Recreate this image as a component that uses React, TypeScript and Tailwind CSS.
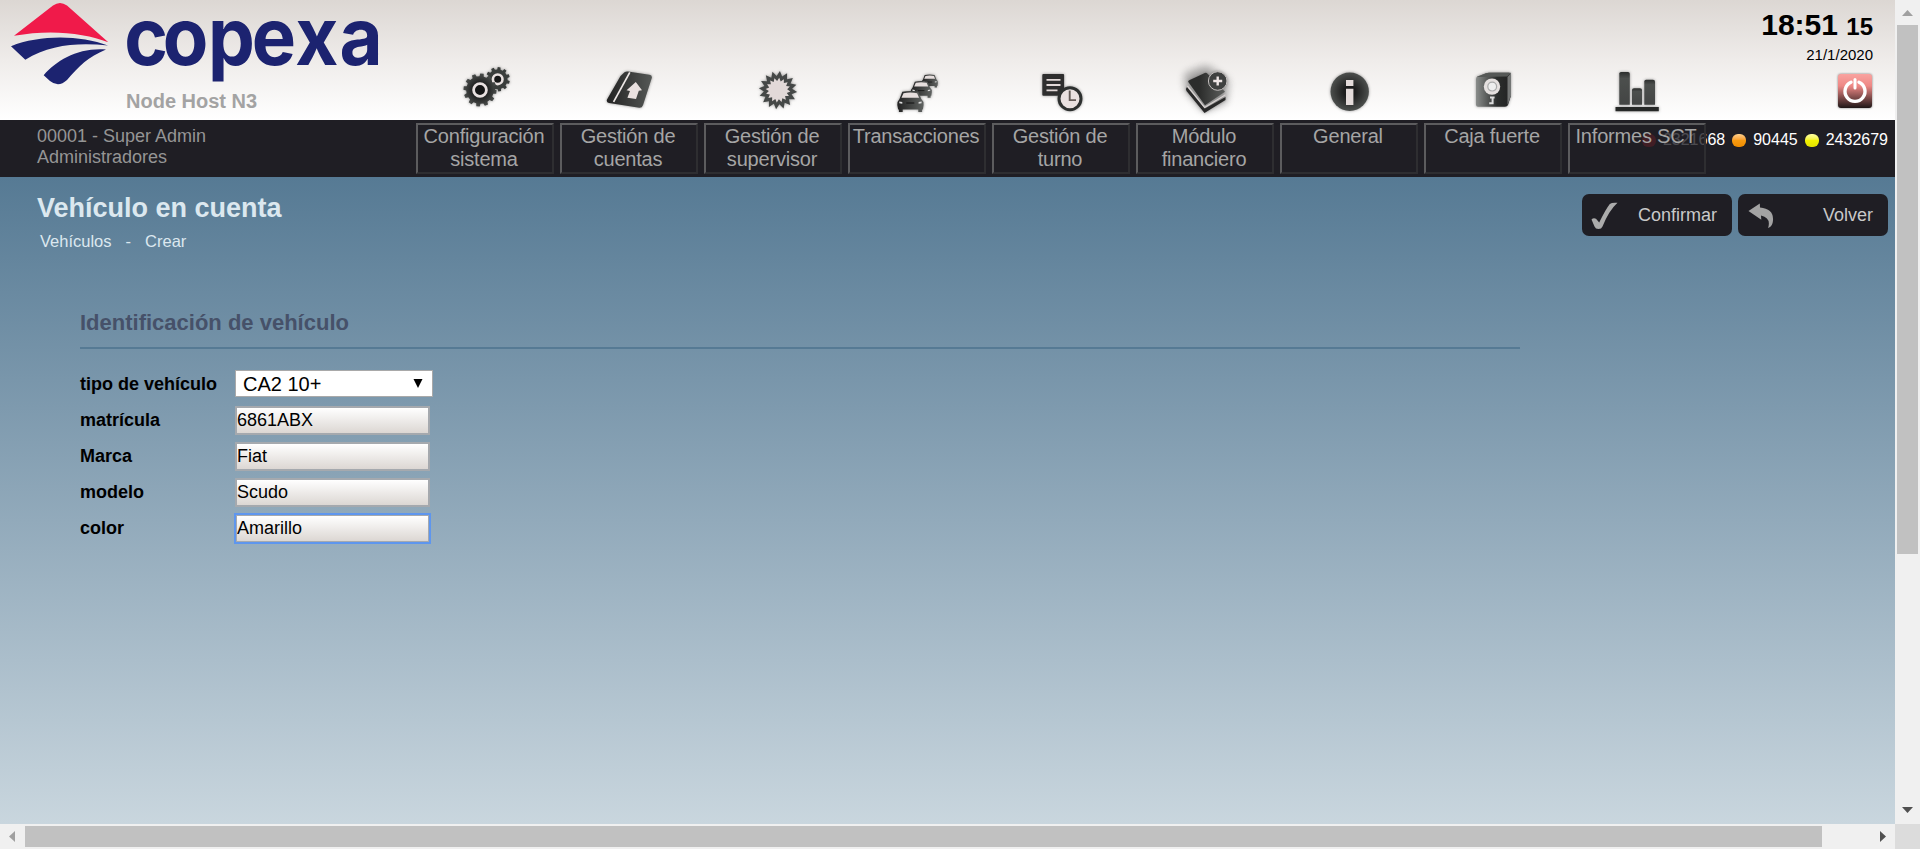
import type { ReactNode } from "react";

const DARK = "#2e2e2e";

function teeth(cx: number, cy: number, outer: number, inner: number, n: number, flat: number) {
  const pts: string[] = [];
  for (let i = 0; i < n; i++) {
    const base = (i / n) * Math.PI * 2 - Math.PI / 2 + 0.12;
    const step = (Math.PI * 2) / n;
    const add = (r: number, a: number) =>
      pts.push((cx + r * Math.cos(a)).toFixed(2) + "," + (cy + r * Math.sin(a)).toFixed(2));
    add(inner, base - step * 0.3);
    add(outer, base - step * flat);
    add(outer, base + step * flat);
    add(inner, base + step * 0.3);
  }
  return pts.join(" ");
}

function star(cx: number, cy: number, outer: number, inner: number, n: number) {
  const pts: string[] = [];
  for (let i = 0; i < n * 2; i++) {
    const a = (i / n) * Math.PI - Math.PI / 2 + 0.1;
    const r = i % 2 ? inner : outer;
    pts.push((cx + r * Math.cos(a)).toFixed(2) + "," + (cy + r * Math.sin(a)).toFixed(2));
  }
  return pts.join(" ");
}

function Car({ x, y, s }: { x: number; y: number; s: number }) {
  return (
    <g transform={`translate(${x} ${y}) scale(${s})`}>
      <path d="M5 0.8Q13 -0.8 21 0.8L24 8Q26.5 10 26.3 14L25.6 18.5H24.8V21H21V18.5H5.4V21H1.6V18.5H0.8L0 14Q0 10 2.2 8Z" fill="url(#car)" />
      <path d="M6.2 2.2Q13 1 19.8 2.2L21.8 6.8H4.2Z" fill="#e6dedd" />
      <path d="M2 10.6l3 .5v1.6l-3-.4zM24.3 10.6l-3 .5v1.6l3-.4z" fill="#ddd" />
      <path d="M9 12h8" stroke="#111" strokeWidth="1" />
    </g>
  );
}

const icons: ReactNode[] = [
  <g>
    <polygon points={teeth(81.7, 29.3, 12.2, 9.9, 11, 0.2)} fill="#3a3d3b" />
    <circle cx="81.7" cy="29.3" r="4.8" fill="#171717" stroke="#e8e0df" strokeWidth="2.6" />
    <polygon points={teeth(64, 40, 16.6, 13.8, 12, 0.2)} fill="url(#gear)" />
    <circle cx="64" cy="40" r="6.4" fill="#151515" stroke="#e8e0df" strokeWidth="2.8" />
  </g>,
  <g>
    <path d="M64.5 22.2Q66 21.3 68 21.6L89.5 24.7Q92.4 25.3 91.8 28L83 55.2Q82 58 79.2 57.7L49 53Q46 52 47 49.5L60.5 26Z" fill="url(#slant)" />
    <path d="M69.8 22.4L53.6 51.9" stroke="#eee8e7" strokeWidth="1.7" />
    <path d="M75.8 32L82 40.2L78.8 40.8L76 49L67.4 47.7L70 41L66.6 40.2Z" fill="#eae1e0" />
  </g>,
  <g>
    <polygon points={star(74, 40.2, 19.2, 14.2, 16)} fill="#454847" />
    <polygon points={star(74, 40.2, 12.4, 9.2, 16)} fill="#e2d9d8" />
  </g>,
  <g>
    <Car x={73.6} y={24.6} s={0.62} />
    <Car x={62.8} y={31} s={0.8} />
    <Car x={49.3} y={41} s={1} />
  </g>,
  <g>
    <rect x="50.3" y="24" width="21.8" height="21.8" rx="1" fill={DARK} />
    <path d="M54.5 29.8h14M54.5 35h14M54.5 40.3h11" stroke="#e2d9d8" strokeWidth="1.8" />
    <circle cx="78" cy="48.7" r="11" fill="#e9e1e0" stroke="#2d302f" strokeWidth="3" />
    <path d="M77.7 40.5v9.6h6.3" fill="none" stroke="#655c58" strokeWidth="1.9" />
  </g>,
  <g>
    <path d="M49 24L70 16L92 30L90 52L68 61L50 40Z" fill="#555" opacity="0.38" className="blur-[4px]" />
    <path d="M51 37Q49 39 50.5 41L68.5 63L89.5 50V47L68.8 58.6Z" fill="#292929" />
    <path d="M51.4 36L68.6 57.4L89.5 44.7" fill="none" stroke="#d8d2d1" strokeWidth="1.2" />
    <path d="M52.3 32Q51.8 31 53.2 30.2L68.8 23Q70.4 22.4 71.3 23.6L89 41.8L69 55.2Z" fill="url(#book)" />
    <circle cx="81.7" cy="31" r="9.3" fill="#3f4140" stroke="#c4bfbe" strokeWidth="1" />
    <path d="M77.2 31h9M81.7 26.5v9" stroke="#eee6e5" strokeWidth="2.4" />
  </g>,
  <g>
    <circle cx="69.7" cy="41.7" r="19.2" fill="url(#info)" />
    <path d="M66 30h7.4v6H66zM66 38.7h7.4V55H66z" fill="#e4dbda" />
  </g>,
  <g>
    <path d="M52 29Q52 27 54 26.2L62 23.2Q63 22.7 65 22.7H85Q87.2 22.7 87 25V45.5L84 55Q83.3 56.7 81 56.7H54Q52 56.7 52 54.7Z" fill="url(#safe)" />
    <path d="M52.5 27L62 23.2Q63 22.7 65 22.7H87L83.2 26.6Z" fill="#555856" />
    <path d="M83.5 27L87 23V45.5L83.5 55Z" fill="#737574" />
    <circle cx="68" cy="36.6" r="8.2" fill="#e5e0df" />
    <circle cx="68.2" cy="36.6" r="4.4" fill="#eee" stroke="#aaa" strokeWidth="1.2" />
    <path d="M66 47.4h4.6M68.6 47v6.3h-3.4" stroke="#ddd" strokeWidth="2" fill="none" />
  </g>,
  <g fill="url(#bar)">
    <path d="M51.3 54.7V23.5Q51.3 22 53 22H60Q61.8 22 61.8 23.8V54.7Z" />
    <path d="M64 54.7V40Q64 38.3 66 38.3H72Q74 38.3 74 40V54.7Z" />
    <path d="M76.3 54.7V31.5Q76.3 29.7 78 29.7H85Q87 29.7 87 31.5V54.7Z" />
    <path d="M47.5 57H90.8V61.2H47.5Z" fill="#262827" />
  </g>,
];

const menu = [
  "Configuración sistema",
  "Gestión de cuentas",
  "Gestión de supervisor",
  "Transacciones",
  "Gestión de turno",
  "Módulo financiero",
  "General",
  "Caja fuerte",
  "Informes SCT",
];

function Defs() {
  return (
    <svg width="0" height="0" className="absolute">
      <defs>
        <radialGradient id="gear"><stop offset="0.3" stopColor="#161616" /><stop offset="1" stopColor="#4a4d4b" /></radialGradient>
        <radialGradient id="info"><stop offset="0.3" stopColor="#1d1d1d" /><stop offset="1" stopColor="#4c4f4d" /></radialGradient>
        <linearGradient id="slant"><stop offset="0" stopColor="#222" /><stop offset="1" stopColor="#555856" /></linearGradient>
        <linearGradient id="book"><stop offset="0.3" stopColor="#2b2c2b" /><stop offset="1" stopColor="#5d5f5d" /></linearGradient>
        <linearGradient id="safe"><stop offset="0" stopColor="#8a8d8b" /><stop offset="0.6" stopColor="#2b2d2c" /><stop offset="1" stopColor="#222" /></linearGradient>
        <linearGradient id="car"><stop offset="0" stopColor="#222" /><stop offset="1" stopColor="#606361" /></linearGradient>
        <linearGradient id="bar" x2="0" y2="1"><stop offset="0" stopColor="#2c2e2d" /><stop offset="0.2" stopColor="#4c4f4d" /><stop offset="1" stopColor="#434544" /></linearGradient>
        <linearGradient id="power" x2="0" y2="1"><stop offset="0" stopColor="#f9a3a0" /><stop offset="0.35" stopColor="#ee8885" /><stop offset="0.7" stopColor="#7d4a49" /><stop offset="1" stopColor="#1f1717" /></linearGradient>
      </defs>
    </svg>
  );
}

function Logo() {
  return (
    <svg width="400" height="90" viewBox="0 0 400 90" className="block overflow-visible">
      <path d="M14 35.8L53 5.5Q60 0.5 67 5.5L108.3 42.2C85 33 50 29 14 35.8Z" fill="#f01a4a" />
      <path d="M11 46.2C40 34.5 80 35 108 45.5C80 42.5 50 44 25.3 59.8Z" fill="#1c2370" />
      <path d="M106 49.5C88 57 79 66 67 80Q58.5 88 50 81L43.7 75.3C57 60 78 47.5 106 49.5Z" fill="#1c2370" />
      <text
        transform="scale(0.93 1)"
        y="64.5"
        x="133.6 175 223.8 270.8 317.6 365"
        fontFamily="Inter"
        fontWeight="700"
        fontSize="80"
        fill="#1c2370"
      >
        copexa
      </text>
    </svg>
  );
}

function Led({ color, value }: { color: string; value: string }) {
  return (
    <span className="flex items-center gap-[7px]">
      <span className={`block h-[13px] w-[14px] rounded-[6px] ${color}`} />
      {value}
    </span>
  );
}

const fields = [
  { label: "matrícula", value: "6861ABX" },
  { label: "Marca", value: "Fiat" },
  { label: "modelo", value: "Scudo" },
  { label: "color", value: "Amarillo" },
];

export default function App() {
  return (
    <div className="grid h-[849px] w-[1920px] grid-cols-[1895px_25px] grid-rows-[824px_25px] overflow-hidden bg-[#f0f0f0] font-['Liberation_Sans',Arial,sans-serif]">
      <Defs />
      <div className="flex min-h-0 flex-col">
        <header className="flex h-[120px] shrink-0 bg-linear-to-b from-[#dcd7d3] via-[#efecea] to-white">
          <div className="w-[416px]">
            <Logo />
            <div className="pl-[126px] text-[20px] leading-[22px] font-bold text-[#a3a3a3]">Node Host N3</div>
          </div>
          <div className="flex items-end gap-[6px]">
            {icons.map((icon, i) => (
              <svg key={i} width="138" height="70" viewBox="0 0 138 70" className="drop-shadow-[0_0_1.5px_rgba(0,0,0,0.4)]">
                {icon}
              </svg>
            ))}
          </div>
          <div className="ml-auto flex flex-col items-end pr-[22px] text-black">
            <div className="pt-[7px] text-[30px] leading-[35px] font-bold">
              18:51 <span className="text-[24px]">15</span>
            </div>
            <div className="pt-[2px] text-[15px] leading-[18px]">21/1/2020</div>
            <svg width="36" height="36" viewBox="0 0 36 36" className="mt-[9px] drop-shadow-[0_0_1px_rgba(0,0,0,0.5)]">
              <rect x="1" y="1" width="34" height="34" rx="3" fill="url(#power)" />
              <path d="M14 9.2a10 10 0 1 0 8 0" fill="none" stroke="#fff" strokeWidth="3.4" strokeLinecap="round" />
              <path d="M18 6.5V15" stroke="#fff" strokeWidth="3" strokeLinecap="round" />
            </svg>
          </div>
        </header>

        <nav className="relative flex h-[57px] shrink-0 bg-[#1f1e24]">
          <div className="absolute top-[10px] right-[7px] flex gap-[7px] text-[16px] leading-[20px] text-white">
            <Led color="bg-[#c81e28]" value="2321668" />
            <Led color="bg-linear-to-b from-[#ffd08a] via-[#f79a10] to-[#ee8c00]" value="90445" />
            <Led color="bg-linear-to-b from-[#ffffa0] via-[#f2f200] to-[#e2e200]" value="2432679" />
          </div>
          <div className="w-[416px] pt-[6px] pl-[37px] text-[18px] leading-[21px] text-[#959595]">
            <div>00001 - Super Admin</div>
            <div>Administradores</div>
          </div>
          <div className="relative flex gap-[6px] pt-[3px]">
            {menu.map((m) => (
              <div
                key={m}
                className="h-[51px] w-[138px] border-2 border-t-[#5c5c5e] border-r-[#2e2e31] border-b-[#2e2e31] border-l-[#5c5c5e] bg-[#1f1e24]/80 pr-[4px] pl-[2px] text-center text-[20px] leading-[23px] tracking-[-0.2px] text-[#a5a5a5]"
              >
                {m}
              </div>
            ))}
          </div>
        </nav>

        <main className="flex-1 bg-linear-to-b from-[#567a94] to-[#c9d6de]">
          <div className="flex h-[120px] justify-between pr-[7px] pl-[37px]">
            <div className="pt-[15px]">
              <h1 className="text-[27px] leading-[32px] font-bold text-[#dce8ef]">Vehículo en cuenta</h1>
              <div className="flex gap-[14px] pt-[7px] pl-[3px] text-[16.5px] leading-[20px] text-[#dce8ef]">
                <span>Vehículos</span>
                <span>-</span>
                <span>Crear</span>
              </div>
            </div>
            <div className="flex gap-[6px] pt-[17px]">
              <button className="flex h-[42px] w-[150px] items-center justify-between rounded-[7px] bg-[#1f1e24] pt-px pr-[15px] pl-[9px] text-[18px] text-[#c9c9c9]">
                <svg width="28" height="28" viewBox="0 0 28 28">
                  <path d="M0.5 17.5Q2.5 15.5 5 16.8L8.2 20.5Q14.5 7.5 18.8 2Q21 0.2 26.5 0.8Q18 8.5 11.5 24.5Q10.5 27 7.5 27Q4.5 27 3.5 24.5Z" fill="#ababab" />
                </svg>
                Confirmar
              </button>
              <button className="flex h-[42px] w-[150px] items-center justify-between rounded-[7px] bg-[#1f1e24] pt-px pr-[15px] pl-[10px] text-[18px] text-[#c9c9c9]">
                <svg width="26" height="26" viewBox="0 0 26 26">
                  <path d="M0.5 8L11.8 0.5L12 4.5Q27.5 6 24.6 20Q23.5 24 20 25Q23.5 15 13 12.5L13.3 16.8Z" fill="#a3a3a3" />
                </svg>
                Volver
              </button>
            </div>
          </div>

          <section className="ml-[80px] w-[1440px]">
            <h2 className="h-[52px] border-b-2 border-[#567a94] pt-[13px] text-[22px] leading-[26px] font-bold text-[#465169]">
              Identificación de vehículo
            </h2>
            <div className="grid auto-rows-[36px] grid-cols-[155px_200px] items-center pt-[17px]">
              <label className="text-[18px] font-bold">tipo de vehículo</label>
              <div className="mb-px flex h-[27px] w-[198px] items-center justify-between border border-[#a9a9a9] bg-white pr-[9px] pl-[7px] text-[20px] leading-[24px]">
                CA2 10+
                <svg width="10" height="9" viewBox="0 0 10 9">
                  <path d="M0.5 0H9.5L5 9Z" />
                </svg>
              </div>
              {fields.map((f) => (
                <div key={f.label} className="contents">
                  <label className="text-[18px] font-bold">{f.label}</label>
                  <input
                    readOnly
                    value={f.value}
                    className={`h-[29px] w-[195px] border-2 border-[#a5a9ae] bg-linear-to-b from-white to-[#dcd7d3] text-[18px] ${
                      f.label === "color" ? "outline-2 outline-offset-[-1px] outline-[#5e96ee]" : "outline-none"
                    }`}
                  />
                </div>
              ))}
            </div>
          </section>
        </main>
      </div>

      <div className="flex flex-col items-center">
        <svg width="25" height="25" viewBox="0 0 25 25" className="shrink-0">
          <path d="M7 16H18L12.5 10Z" fill="#a0a0a0" />
        </svg>
        <div className="h-[529px] w-[21px] bg-[#c1c1c1]" />
        <svg width="25" height="25" viewBox="0 0 25 25" className="mt-auto shrink-0">
          <path d="M7 8H18L12.5 14Z" fill="#505050" />
        </svg>
      </div>
      <div className="flex items-center">
        <svg width="25" height="25" viewBox="0 0 25 25" className="shrink-0">
          <path d="M15 7V18L9 12.5Z" fill="#a0a0a0" />
        </svg>
        <div className="h-[21px] w-[1797px] bg-[#c1c1c1]" />
        <svg width="25" height="25" viewBox="0 0 25 25" className="ml-auto shrink-0">
          <path d="M10 7V18L16 12.5Z" fill="#505050" />
        </svg>
      </div>
      <div className="bg-[#dcdcdc]" />
    </div>
  );
}
